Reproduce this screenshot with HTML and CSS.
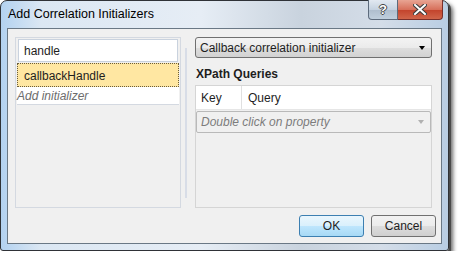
FILE: index.html
```html
<!DOCTYPE html>
<html lang="en">
<head>
  <meta charset="UTF-8">
  <title>Add Correlation Initializers</title>
  <link rel="stylesheet" href="styles.css">
</head>
<body>
  <div class="window">
    <div class="titlebar">
      <span class="title">Add Correlation Initializers</span>
      <div class="caption-buttons">
        <div class="cap-btn help-btn">?</div>
        <div class="cap-btn close-btn">
          <svg width="14" height="11" viewBox="0 0 14 11">
            <path d="M2 1 L12 10 M12 1 L2 10" stroke="#3b3b3b" stroke-width="4" stroke-linecap="square"/>
            <path d="M2 1 L12 10 M12 1 L2 10" stroke="#fff" stroke-width="2" stroke-linecap="square"/>
          </svg>
        </div>
      </div>
    </div>

    <div class="client">
      <div class="content">
        <!-- initializer list -->
        <div class="left-panel">
          <div class="text-box">handle</div>
          <div class="list-row selected">callbackHandle</div>
          <div class="list-row add-row">Add initializer</div>
        </div>

        <div class="splitter"></div>

        <div class="right-panel">
          <div class="combo">
            <span>Callback correlation initializer</span>
            <span class="combo-arrow"></span>
          </div>
          <div class="section-label">XPath Queries</div>
          <div class="grid">
            <div class="grid-header">
              <div class="col-key">Key</div>
              <div class="col-query">Query</div>
            </div>
            <div class="grid-new-row">
              <span>Double click on property</span>
              <span class="grey-arrow"></span>
            </div>
          </div>
        </div>
      </div>

      <div class="button-row">
        <button class="btn default-btn">OK</button>
        <button class="btn">Cancel</button>
      </div>
    </div>
  </div>
</body>
</html>
```

FILE: styles.css
```css
body {
  margin: 0;
  background-color: #fff;
  font-family: 'Liberation Sans', Arial, sans-serif;
  font-size: 12px;
  color: #1e1e1e;
}

.window {
  box-sizing: border-box;
  width: 449px;
  height: 251px;
  border: 1px solid #2f3237;
  border-radius: 7px 7px 3px 3px;
  background: linear-gradient(90deg, #b3d2f0 0px, #dbe7f3 40px, #e6edf5 200px, #c9d3de 300px, #d4dde8 380px, #b8cde3 449px);
  box-shadow: 2px 2px 0 #4a4a4a, 4px 4px 4px rgba(0, 0, 0, 0.6);
  display: flex;
  flex-direction: column;
}

.titlebar {
  height: 27px;
  display: flex;
  justify-content: space-between;
  align-items: flex-start;
}

.title {
  padding: 6px 0 0 7px;
  font-size: 12.5px;
  color: #000;
}

.caption-buttons {
  display: flex;
  margin-right: 5px;
  margin-top: -1px;
}

.cap-btn {
  box-sizing: border-box;
  height: 20px;
  display: flex;
  align-items: center;
  justify-content: center;
  border: 1px solid #5d6b7c;
  border-top: none;
}

.help-btn {
  width: 30px;
  border-radius: 0 0 0 4px;
  background: linear-gradient(#e2e9f1, #c5d2e0 50%, #aebdcd 51%, #c0cfdd);
  color: #fff;
  font-weight: bold;
  font-size: 13px;
  text-shadow: 1px 0 0 #444, -1px 0 0 #444, 0 1px 0 #444, 0 -1px 0 #444;
}

.close-btn {
  width: 45px;
  border-left: none;
  border-color: #7a2f2a;
  border-radius: 0 0 4px 0;
  background: linear-gradient(#e8a493, #d7705b 50%, #c2422b 51%, #d0654a);
}

.client {
  flex: 1;
  margin: 0 6px 6px 6px;
  border: 1px solid #6a7885;
  background-color: #f0f0f0;
  display: flex;
  flex-direction: column;
}

.content {
  display: flex;
  padding: 8px 0 0 7px;
  height: 171px;
}

.left-panel {
  box-sizing: border-box;
  width: 166px;
  height: 171px;
  border: 1px solid #d4d9e1;
  padding: 1px;
}

.text-box {
  box-sizing: border-box;
  height: 23px;
  margin: 0 1px 1px 1px;
  border: 1px solid #c9d2de;
  background-color: #fff;
  padding: 4px 0 0 5px;
}

.list-row {
  box-sizing: border-box;
  height: 24px;
  padding: 5px 0 0 6px;
}

.selected {
  background-color: #ffe7a2;
  border: 1px dotted #6b5d3a;
}

.add-row {
  height: 18px;
  padding: 2px 0 0 0;
  background-color: #fff;
  color: #6d6d6d;
  font-style: italic;
  border-bottom: 1px solid #d4d9e1;
}

.splitter {
  width: 2px;
  height: 150px;
  margin: 11px 8px 0 4px;
  background-color: #d8dde7;
}

.right-panel {
  width: 237px;
}

.combo {
  box-sizing: border-box;
  height: 21px;
  border: 1px solid #707070;
  border-radius: 3px;
  background: linear-gradient(#f3f3f3, #ebebeb 50%, #dedede 51%, #d2d2d2);
  display: flex;
  align-items: center;
  justify-content: space-between;
  padding: 0 6px 0 4px;
}

.combo-arrow {
  border-left: 3px solid transparent;
  border-right: 3px solid transparent;
  border-top: 4px solid #000;
}

.section-label {
  font-weight: bold;
  margin: 9px 0 4px 1px;
}

.grid {
  box-sizing: border-box;
  height: 123px;
  border: 1px solid #d5d5d5;
}

.grid-header {
  display: flex;
  height: 23px;
  background-color: #fff;
  border-bottom: 1px solid #e6e6e6;
}

.col-key {
  width: 40px;
  padding: 5px 0 0 5px;
  border-right: 1px solid #e0e0e0;
}

.col-query {
  padding: 5px 0 0 6px;
}

.grid-new-row {
  box-sizing: border-box;
  height: 22px;
  margin-top: 1px;
  border: 1px solid #b9b9b9;
  border-radius: 2px;
  display: flex;
  align-items: center;
  justify-content: space-between;
  padding: 0 6px 0 4px;
  color: #7c7c7c;
  font-style: italic;
}

.grey-arrow {
  border-left: 3px solid transparent;
  border-right: 3px solid transparent;
  border-top: 4px solid #b0b0b0;
}

.button-row {
  display: flex;
  justify-content: flex-end;
  gap: 7px;
  padding: 7px 5px 0 0;
}

.btn {
  box-sizing: border-box;
  width: 65px;
  height: 22px;
  border: 1px solid #707070;
  border-radius: 3px;
  background: linear-gradient(#f2f2f2, #ebebeb 50%, #dddddd 51%, #cfcfcf);
  font-family: inherit;
  font-size: 12px;
  color: #1e1e1e;
  padding: 0;
}

.default-btn {
  border-color: #3c7fb1;
  background: linear-gradient(#eaf6fd, #d9f0fc 50%, #bee6fd 51%, #a7d9f5);
}
```
